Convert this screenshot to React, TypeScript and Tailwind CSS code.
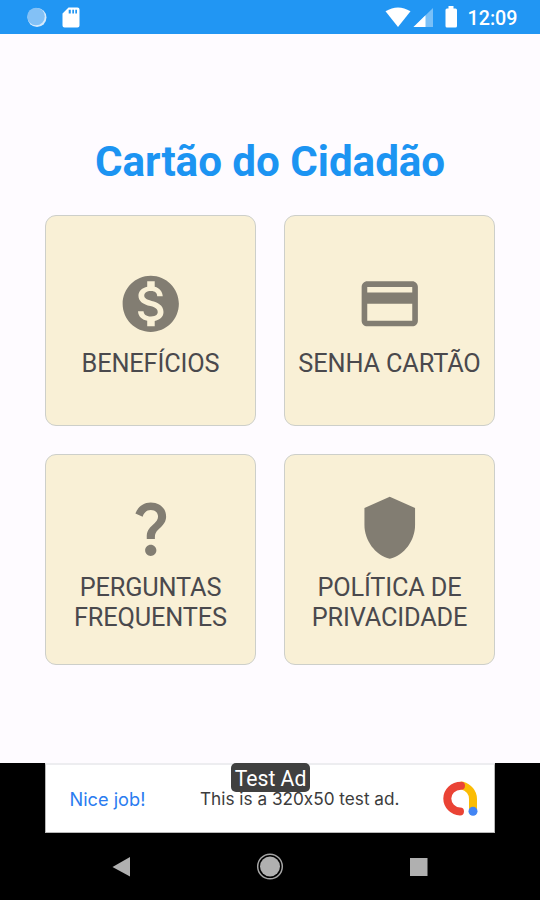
import type { ReactNode } from "react";

function Icon({ children }: { children: ReactNode }) {
  return (
    <svg viewBox="0 0 24 24" className="h-[67.5px] w-[67.5px] shrink-0 fill-[#827d72]">
      {children}
    </svg>
  );
}

function Card({ icon, lines }: { icon: ReactNode; lines: string[] }) {
  return (
    <button className="flex h-[211px] w-[211px] flex-col items-center justify-center gap-3 rounded-[11px] border-[1.5px] border-[#cdcfca] bg-[#f9f0d6] pt-[7.5px]">
      <Icon>{icon}</Icon>
      <span className="flex flex-col text-[25.3px] leading-[30px] tracking-[-0.14px] whitespace-nowrap text-[#4a494d]">
        {lines.map((line) => (
          <span key={line}>{line}</span>
        ))}
      </span>
    </button>
  );
}

function StatusBar() {
  return (
    <header className="flex h-[34px] items-start bg-[#2196f3] text-white">
      <svg viewBox="0 0 90 34" className="h-[34px] w-[90px]">
        <circle cx="37" cy="17.500" r="9.500" fill="#d5eafc" />
        <circle cx="36" cy="16.500" r="8.800" fill="#83c1f6" />
        <path
          fill="#fff"
          fillRule="evenodd"
          d="M68.500 7.500H77.500a2 2 0 0 1 2 2V25.500a2 2 0 0 1-2 2H64.500a2 2 0 0 1-2-2V13.500ZM68.700 9.800V13.500H70.800V9.800ZM72.300 9.800V13.500H74V9.800ZM75.300 9.800V13.500H77V9.800Z"
        />
      </svg>
      <div className="flex-1" />
      <svg viewBox="0 0 80 34" className="h-[34px] w-[80px]" fill="#fff">
        <path d="M5.500 11.300Q18 3.500 30.500 11.300L18 27Z" />
        <path d="M33.500 27L53 8V27Z" opacity=".4" />
        <path d="M33.500 27L45.500 15.300V27Z" />
        <path d="M68.500 6H73.500V8.500H75.500a1.500 1.500 0 0 1 1.500 1.500V26a1.500 1.500 0 0 1-1.500 1.500H67a1.500 1.500 0 0 1-1.500-1.500V10A1.500 1.500 0 0 1 67 8.500H68.500Z" />
      </svg>
      <span className="w-[80px] pt-[7px] pr-[22.5px] text-right text-[19.7px] leading-6 font-medium">
        12:09
      </span>
    </header>
  );
}

function AdBanner() {
  return (
    <div className="relative flex h-[70px] w-[450px] items-center border border-t-2 border-[#b8b8b8] border-t-[#ededf0] bg-white pl-[23.5px] font-['Inter','Liberation_Sans',sans-serif]">
      <span className="w-[130.5px] text-[18.2px] leading-6 whitespace-nowrap text-[#2b7cf0]">
        Nice job!
      </span>
      <span className="w-[243px] text-[17.2px] leading-6 whitespace-nowrap text-[#3c3c3c] [font-feature-settings:'calt'_0]">
        This is a 320x50 test ad.
      </span>
      <svg viewBox="0 0 36 36" className="h-9 w-9 shrink-0" fill="none" strokeWidth="8" strokeLinecap="round">
        <path d="M19 4.500C25.500 6.500 30 11.500 30 18V30" stroke="#fbbc04" />
        <path d="M18 4.800C10 4.800 4.300 10.700 4.300 17.500S10 30.200 17 30.400" stroke="#ea4335" />
        <circle cx="30" cy="30.300" r="4.500" fill="#4285f4" />
      </svg>
      <span className="absolute -top-[2px] left-[185px] flex h-[29px] w-[79px] items-center justify-center rounded-[5px] bg-[#404040] pt-[3px] font-['Roboto',sans-serif] text-[21.2px] leading-none whitespace-nowrap text-white">
        Test Ad
      </span>
    </div>
  );
}

export default function App() {
  return (
    <div className="flex h-[900px] w-[540px] flex-col overflow-hidden bg-[#fefbff] font-['Roboto',sans-serif]">
      <StatusBar />
      <main className="flex h-[729px] flex-col items-center pt-[103px]">
        <h1 className="text-[42.2px] leading-[50px] font-bold tracking-[-0.05px] whitespace-nowrap text-[#1c94f2]">
          Cartão do Cidadão
        </h1>
        <div className="mt-7 grid grid-cols-2 gap-7">
          <Card
            icon={
              <path d="M12 2C6.480 2 2 6.480 2 12s4.480 10 10 10 10-4.480 10-10S17.520 2 12 2zm1.410 16.090V20h-2.670v-1.930c-1.710-.36-3.160-1.460-3.270-3.400h1.960c.1 1.050.82 1.870 2.650 1.870 1.960 0 2.400-.98 2.400-1.590 0-.83-.44-1.610-2.670-2.140-2.480-.6-4.180-1.620-4.180-3.670 0-1.720 1.390-2.840 3.110-3.210V4h2.670v1.950c1.860.45 2.790 1.860 2.850 3.390H14.300c-.05-1.110-.64-1.870-2.220-1.870-1.500 0-2.400.68-2.400 1.640 0 .84.65 1.390 2.670 1.910s4.180 1.390 4.180 3.910c-.01 1.830-1.380 2.830-3.120 3.160z" />
            }
            lines={["BENEFÍCIOS"]}
          />
          <Card
            icon={
              <path d="M20 4H4c-1.110 0-1.990.89-1.990 2L2 18c0 1.110.89 2 2 2h16c1.110 0 2-.89 2-2V6c0-1.110-.89-2-2-2zm0 14H4v-6h16v6zm0-10H4V6h16v2z" />
            }
            lines={["SENHA CARTÃO"]}
          />
          <Card
            icon={
              <path d="M11.070 12.850c.77-1.390 2.250-2.210 3.110-3.440.91-1.290.4-3.700-2.180-3.700-1.690 0-2.520 1.280-2.870 2.340L6.540 6.960C7.250 4.830 9.180 3 11.990 3c2.350 0 3.960 1.070 4.780 2.410.7 1.150 1.110 3.300.03 4.900-1.200 1.770-2.350 2.310-2.970 3.450-.25.46-.35.76-.35 2.240h-2.890c-.01-.78-.13-2.050.48-3.150zM14 20c0 1.100-.9 2-2 2s-2-.9-2-2 .9-2 2-2 2 .9 2 2z" />
            }
            lines={["PERGUNTAS", "FREQUENTES"]}
          />
          <Card
            icon={
              <path d="M12 1L3 5v6c0 5.550 3.840 10.740 9 12 5.160-1.260 9-6.450 9-12V5l-9-4z" />
            }
            lines={["POLÍTICA DE", "PRIVACIDADE"]}
          />
        </div>
      </main>
      <footer className="flex flex-1 flex-col items-center bg-black">
        <AdBanner />
        <svg viewBox="0 0 540 66" className="h-[66px] w-full" fill="#b0b0b0">
          <path d="M112.500 34L130 24V43.500Z" />
          <circle cx="270" cy="33.500" r="12.300" fill="none" stroke="#a5a5a5" strokeWidth="1.500" />
          <circle cx="270" cy="33.500" r="10" />
          <path d="M410 25H427.500V43H410Z" />
        </svg>
      </footer>
    </div>
  );
}
